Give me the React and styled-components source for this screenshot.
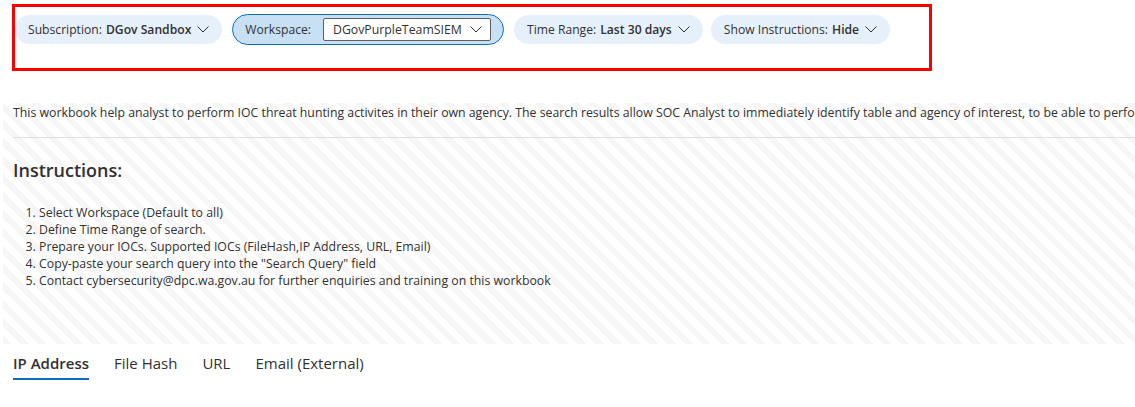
import { createGlobalStyle, styled } from "styled-components";

const GlobalStyle = createGlobalStyle`
  html, body {
    margin: 0;
    padding: 0;
    background: #fff;
    overflow: hidden;
  }
  body {
    font-family: "Open Sans", "Noto Sans", sans-serif;
    color: #323130;
  }
`;

const Page = styled.div`
  width: 1135px;
  height: 407px;
  overflow: hidden;
`;

const ParamBox = styled.div`
  margin: 4px 0 0 12px;
  width: 914px;
  height: 54px;
  border: 3px solid #f00;
  display: flex;
  align-items: flex-start;
  padding: 7px 0 0 0;
  box-sizing: content-box;
`;

const Pill = styled.div`
  height: ${(p) => (p.$active ? "31px" : "29px")};
  margin: ${(p) => (p.$active ? "0" : "1px 0 0")};
  margin-right: ${(p) => p.$gap || 10}px;
  display: flex;
  align-items: center;
  padding: 0 12px;
  border-radius: 16px;
  background: ${(p) => (p.$active ? "#c7e0f4" : "#e6f0fb")};
  border: 1px solid ${(p) => (p.$active ? "#0f6cbd" : "transparent")};
  font-size: 12.15px;
  white-space: nowrap;
  box-sizing: border-box;
  b {
    font-weight: 600;
    margin-left: 4px;
  }
  svg {
    margin-left: 6px;
  }
`;

const Select = styled.div`
  height: 23px;
  width: 168px;
  box-sizing: border-box;
  background: #fff;
  border: 1px solid #605e5c;
  border-radius: 2px;
  display: flex;
  align-items: center;
  justify-content: space-between;
  padding: 0 8px 0 9px;
  margin-left: 12px;
  font-size: 12.3px;
`;

const Chevron = () => (
  <svg width="12" height="7" viewBox="0 0 12 7" fill="none">
    <polyline points="0.5,0.5 6,6 11.5,0.5" stroke="#323130" strokeWidth="1" />
  </svg>
);

const Group = styled.div`
  margin: 32px 0 0 3px;
  height: 241px;
  box-sizing: border-box;
  padding: 0 0 0 10px;
  background: repeating-linear-gradient(
    45deg,
    #f6f6f6 0px,
    #f6f6f6 6px,
    #ffffff 6px,
    #ffffff 12.7px
  );
`;

const Desc = styled.div`
  font-size: 12.3px;
  line-height: 18px;
  padding-top: 1px;
  white-space: nowrap;
`;

const Divider = styled.div`
  height: 1px;
  background: #e1dfdd;
  margin-top: 15px;
`;

const Heading = styled.h2`
  margin: 19px 0 0 0;
  font-size: 18px;
  line-height: 26px;
  font-weight: 600;
`;

const Steps = styled.ol`
  margin: 21px 0 0 0;
  padding-left: 26px;
  font-size: 12.3px;
  line-height: 17px;
`;

const Tabs = styled.div`
  display: flex;
  gap: 25px;
  padding: 8px 0 0 13px;
`;

const Tab = styled.div`
  font-size: 15px;
  line-height: 22px;
  padding-bottom: 4px;
  font-weight: ${(p) => (p.$selected ? 600 : 400)};
  border-bottom: 2px solid ${(p) => (p.$selected ? "#0f6cbd" : "transparent")};
`;

export default function App() {
  return (
    <Page>
      <GlobalStyle />
      <ParamBox>
        <Pill>
          Subscription:<b>DGov Sandbox</b>
          <Chevron />
        </Pill>
        <Pill $active>
          Workspace:
          <Select>
            DGovPurpleTeamSIEM
            <Chevron />
          </Select>
        </Pill>
        <Pill $gap={8}>
          Time Range:<b>Last 30 days</b>
          <Chevron />
        </Pill>
        <Pill>
          Show Instructions:<b>Hide</b>
          <Chevron />
        </Pill>
      </ParamBox>
      <Group>
        <Desc>
          This workbook help analyst to perform IOC threat hunting activites in their own agency. The search results allow SOC Analyst to immediately identify table and agency of interest, to be able to perform further investigation.
        </Desc>
        <Divider />
        <Heading>Instructions:</Heading>
        <Steps>
          <li>Select Workspace (Default to all)</li>
          <li>Define Time Range of search.</li>
          <li>Prepare your IOCs. Supported IOCs (FileHash,IP Address, URL, Email)</li>
          <li>Copy-paste your search query into the "Search Query" field</li>
          <li>Contact cybersecurity@dpc.wa.gov.au for further enquiries and training on this workbook</li>
        </Steps>
      </Group>
      <Tabs>
        <Tab $selected>IP Address</Tab>
        <Tab>File Hash</Tab>
        <Tab>URL</Tab>
        <Tab>Email (External)</Tab>
      </Tabs>
    </Page>
  );
}
